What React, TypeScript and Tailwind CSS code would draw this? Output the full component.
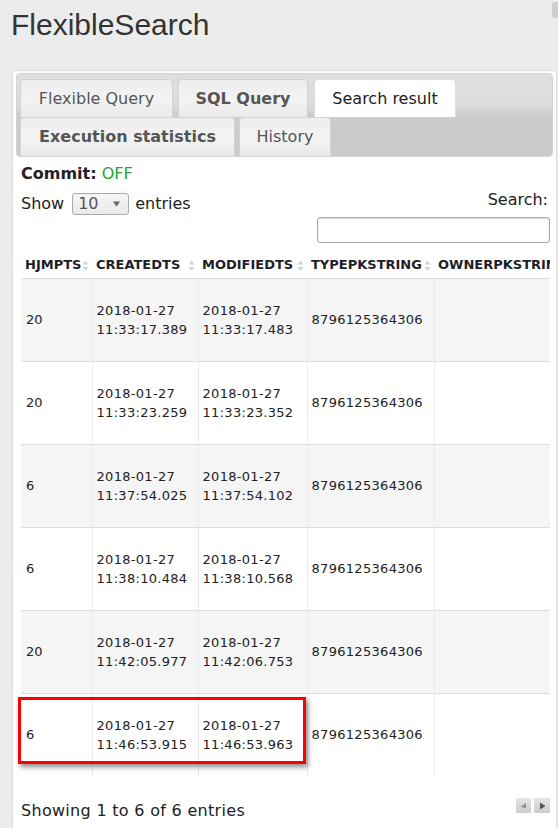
import React from "react";

const rows: [string, string, string][] = [
  ["20", "11:33:17.389", "11:33:17.483"],
  ["20", "11:33:23.259", "11:33:23.352"],
  ["6", "11:37:54.025", "11:37:54.102"],
  ["6", "11:38:10.484", "11:38:10.568"],
  ["20", "11:42:05.977", "11:42:06.753"],
  ["6", "11:46:53.915", "11:46:53.963"],
];

const headers = ["HJMPTS", "CREATEDTS", "MODIFIEDTS", "TYPEPKSTRING", "OWNERPKSTRING", "CODE"];

function SortIcon() {
  return (
    <svg className="absolute right-[3px] top-[7px]" width="7" height="12" viewBox="0 0 7 12">
      <polygon points="3.5,0.5 6.5,4.5 0.5,4.5" fill="#d4d4d4" />
      <polygon points="0.5,7 6.5,7 3.5,11" fill="#d4d4d4" />
    </svg>
  );
}

const inactiveTab =
  "flex items-center justify-center rounded-t-[4px] border border-b-0 border-[#d3d3d3] bg-[linear-gradient(to_bottom,#ededed_0%,#f3f3f3_50%,#eaeaea_100%)] text-[16px] text-[#555555]";

const cell = "border-l border-[#ebebeb] pl-[4px] align-middle text-[13px] leading-[19px] tracking-[0.3px]";

export default function App() {
  return (
    <div className="relative min-h-[828px] w-full overflow-hidden bg-[#ececec] pt-[8px] font-['DejaVu_Sans',Verdana,sans-serif] text-[#222222]">
      <div className="absolute right-0 top-[2px] h-[16px] w-[6px] rounded-l-[3px] bg-[#cdcdcd]" />
      <h1 className="ml-[11px] font-['Liberation_Sans',Arial,sans-serif] text-[30px] font-normal leading-[34px] text-[#333333]">
        FlexibleSearch
      </h1>

      <div className="ml-[12px] mr-[1px] mt-[28px] rounded-t-[4px] border border-b-0 border-[#dddddd] bg-white px-[3px] pb-[12px] pt-[2px]">
        {/* tab header */}
        <div className="rounded-[4px] border border-[#d3d3d3] bg-[linear-gradient(to_bottom,#dfdfdf_0%,#dcdcdc_38%,#cccccc_50%,#cbcbcb_100%)] px-[3px] pt-[5px]">
          <div className="flex h-[38px]">
            <div className={`${inactiveTab} w-[153px]`}>Flexible Query</div>
            <div className={`${inactiveTab} ml-[5px] w-[130px] font-bold`}>SQL Query</div>
            <div className="ml-[6px] flex w-[142px] items-center justify-center rounded-t-[4px] border border-b-0 border-[#dddddd] bg-white text-[16px] text-[#212121]">
              Search result
            </div>
          </div>
          <div className="flex h-[39px]">
            <div className={`${inactiveTab} w-[215px] font-bold`}>Execution statistics</div>
            <div className={`${inactiveTab} ml-[4px] w-[92px]`}>History</div>
          </div>
        </div>

        {/* content */}
        <div className="pl-[5px] pr-[3px]">
          <div className="mt-[7px] text-[16px] leading-[20px]">
            <span className="font-bold">Commit:</span> <span className="text-[#22a62c]">OFF</span>
          </div>

          <div className="mt-[6px] flex items-start justify-between">
            <div className="mt-[3px] flex h-[22px] items-center text-[16px] leading-[20px]">
              <span>Show</span>
              <div className="ml-[8px] flex h-[22px] w-[57px] items-center justify-between rounded-[3px] border border-[#aaaaaa] bg-[linear-gradient(to_bottom,#f6f6f6,#e9e9e9)] pl-[5px] pr-[8px] text-[#555555]">
                <span>10</span>
                <svg width="7" height="6" viewBox="0 0 7 6">
                  <polygon points="0,0.5 7,0.5 3.5,5.5" fill="#666666" />
                </svg>
              </div>
              <span className="ml-[6px]">entries</span>
            </div>
            <div className="flex flex-col items-end">
              <div className="pr-[2px] text-[16px] leading-[20px]">Search:</div>
              <div className="mt-[7px] h-[26px] w-[233px] rounded-[3px] border border-[#aaaaaa] bg-white shadow-[inset_0_1px_2px_rgba(0,0,0,0.15)]" />
            </div>
          </div>

          <div className="mt-[10px] w-[529px] overflow-hidden">
            <table className="w-[740px] table-fixed border-collapse text-left">
              <colgroup>
                <col className="w-[71px]" />
                <col className="w-[106px]" />
                <col className="w-[109px]" />
                <col className="w-[127px]" />
                <col className="w-[160px]" />
                <col className="w-[167px]" />
              </colgroup>
              <thead>
                <tr className="h-[25px] border-b border-[#dddddd]">
                  {headers.map((h) => (
                    <th
                      key={h}
                      className="relative overflow-hidden whitespace-nowrap pl-[4px] align-middle text-[13px] font-bold leading-[16px] text-[#1e1e28]"
                    >
                      <SortIcon />
                      <span className="relative">{h}</span>
                    </th>
                  ))}
                </tr>
              </thead>
              <tbody>
                {rows.map((r, i) => (
                  <tr
                    key={i}
                    className={`h-[83px] ${i < rows.length - 1 ? "border-b border-[#dddddd]" : ""} ${
                      i % 2 === 0 ? "bg-[#f5f5f5]" : "bg-white"
                    }`}
                  >
                    <td className="pl-[5px] align-middle text-[13px] leading-[19px]">{r[0]}</td>
                    <td className={cell}>
                      <div>2018-01-27</div>
                      <div>{r[1]}</div>
                    </td>
                    <td className={cell}>
                      <div>2018-01-27</div>
                      <div>{r[2]}</div>
                    </td>
                    <td className={cell}>8796125364306</td>
                    <td className="border-l border-[#ebebeb]" />
                    <td className="border-l border-[#ebebeb]" />
                  </tr>
                ))}
              </tbody>
            </table>
          </div>

          <div className="mt-[25px] flex items-start justify-between">
            <div className="text-[16px] leading-[20px] tracking-[0.3px]">Showing 1 to 6 of 6 entries</div>
            <div className="-mt-[3px] flex gap-[3px]">
              <div className="flex h-[15px] w-[15px] items-center justify-center bg-[linear-gradient(to_bottom,#e4e4e4,#cdcdcd)]">
                <svg width="7" height="7" viewBox="0 0 7 7">
                  <polygon points="0.5,5 6,1 6,6" fill="#8a8a8a" />
                </svg>
              </div>
              <div className="flex h-[15px] w-[16px] items-center justify-center bg-[linear-gradient(to_bottom,#e4e4e4,#cdcdcd)]">
                <svg width="7" height="8" viewBox="0 0 7 8">
                  <polygon points="1,0.5 6.5,4 1,7.5" fill="#555555" />
                </svg>
              </div>
            </div>
          </div>
        </div>
      </div>

      {/* annotation */}
      <div className="absolute left-[18px] top-[697px] h-[67px] w-[288px] border-[3px] border-[#ff0000] shadow-[2px_3px_5px_rgba(0,0,0,0.45)]" />
    </div>
  );
}
